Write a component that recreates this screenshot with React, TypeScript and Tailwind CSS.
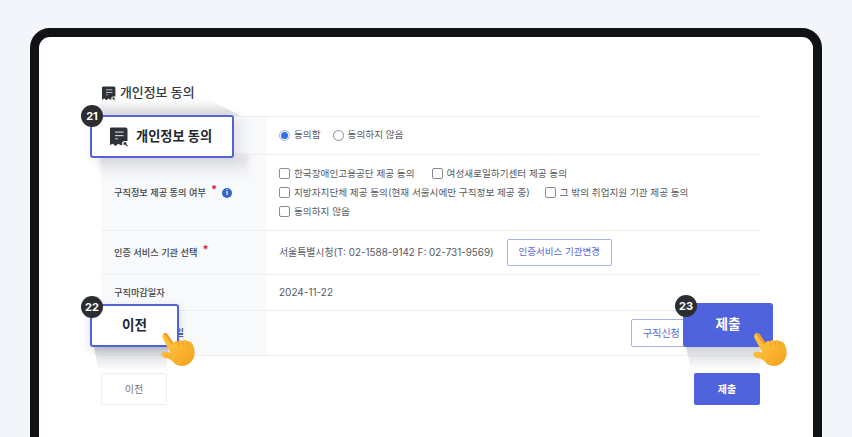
import React from "react";

const font = { fontFamily: '"Inter","Noto Sans CJK KR",sans-serif' };

function DocIcon({ className }: { className: string }) {
  return (
    <svg viewBox="0 0 18 20" className={className}>
      <path d="M2.500 0.500h13a2 2 0 0 1 2 2v11.500h-2.500a2.500 2.500 0 0 0-2.500 3.800l-1.500.4-2.700-1.500-2.800 2.300-2.800-2.300-3.200 1.600V2.500a2 2 0 0 1 2-2z" fill="#2f3238" />
      <rect x="5" y="4.500" width="8.500" height="1.200" fill="#c9cbce" />
      <rect x="5" y="8" width="8.500" height="1.200" fill="#c9cbce" />
      <rect x="5" y="11.300" width="3" height="1" fill="#c9cbce" />
      <circle cx="15" cy="16.500" r="1.500" fill="#2f3238" />
      <path d="M16 17.700l1.500 1.500" stroke="#2f3238" strokeWidth="1.200" />
    </svg>
  );
}

function Hand({ className }: { className: string }) {
  return (
    <svg viewBox="0 0 38 36" className={className}>
      <defs>
        <linearGradient id="hand" x1="0" y1="0" x2="1" y2="1">
          <stop offset="0" stopColor="#ffca45" />
          <stop offset="1" stopColor="#f4a21f" />
        </linearGradient>
      </defs>
      <path d="M2.500 1.500c2-1.500 4 .2 5 2l5 7.500c1-2 3-2.500 4.500-1.500 1-1.600 3.200-1.800 4.500-.6 1.400-1.400 3.600-1 4.600.6 2.300-.8 4.300.4 5.600 3 2.400 5 3 11.500-.7 16.500-3.200 4-8.600 6-13.500 4.600-3-.8-4.700-2.500-6.500-4.800l-4-2.200C4 25.800.2 25 .3 22.600c.1-2.400 3-3.200 6-2.600l3 .6-3.200-6L1.500 6C.8 4.500 1.200 2.500 2.500 1.500z" fill="url(#hand)" />
      <path d="M2.500 1.500C4.500 0 6.500 1.700 7.500 3.500l5 7.500-2 1.500-5-7C4.500 4 3 2.800 2.500 1.500z" fill="#ee8f2a" opacity=".75" />
      <path d="M17 9.500l1 4M21.500 8.900l1 4M26 9.500l.8 3.500" stroke="#e8942a" strokeWidth="1" fill="none" />
    </svg>
  );
}

function Badge({ n, className }: { n: number; className: string }) {
  return (
    <div className={`absolute z-30 flex h-[22px] w-[22px] items-center justify-center rounded-full bg-[#2b2d31] text-[11px] font-bold text-white ${className}`}>
      {n}
    </div>
  );
}

function Check({ label }: { label: string }) {
  return (
    <span className="flex items-center gap-[4px]">
      <span className="h-[11px] w-[11px] rounded-[2px] border border-[#8a8d94] bg-white" />
      <span>{label}</span>
    </span>
  );
}

function Row({ label, mark, info, className, children }: { label: string; mark?: boolean; info?: boolean; className: string; children?: React.ReactNode }) {
  return (
    <div className={`flex border-b border-[#eceef1] ${className}`}>
      <div className="flex w-[165px] shrink-0 items-center bg-[#f8f9fb] pl-[13px] text-[9.2px] font-medium text-[#3f434a]">
        {label}
        {mark && <span className="relative top-[-3px] ml-[5px] text-[11px] font-bold leading-none text-[#e5103f]">*</span>}
        {info && (
          <span className="ml-[5px] flex h-[10px] w-[10px] items-center justify-center rounded-full bg-[#3a62c9] text-[7px] font-bold leading-none text-white">i</span>
        )}
      </div>
      <div className="flex min-w-0 flex-1 items-center pl-[13px] pr-[4px] text-[9.65px] text-[#565a61]">{children}</div>
    </div>
  );
}

export default function App() {
  return (
    <div className="h-[437px] w-[852px] overflow-hidden bg-[#f4f5fa] pl-[30px] pt-[28px]" style={font}>
      <div className="relative h-[440px] w-[792px] rounded-[20px] border-[9px] border-[#111216] bg-white pl-[63px] pr-[53px] pt-[47px]">
        <div className="flex h-[18px] items-center gap-[4px] text-[12.9px] font-medium text-[#33373f]">
          <DocIcon className="h-[15px] w-[14px]" />
          개인정보 동의
        </div>
        <div className="-ml-[1px] mt-[14px] border-t border-[#eceef1]">
          <Row label="" className="h-[38px]">
            <span className="flex items-center gap-[4px]">
              <span className="flex h-[11px] w-[11px] items-center justify-center rounded-full border border-[#8fb4f5] bg-white">
                <span className="h-[7px] w-[7px] rounded-full bg-[#2f6fe8]" />
              </span>
              동의함
            </span>
            <span className="ml-[12px] flex items-center gap-[4px]">
              <span className="h-[11px] w-[11px] rounded-full border border-[#8a8d94]" />
              동의하지 않음
            </span>
          </Row>
          <Row label="구직정보 제공 동의 여부" mark info className="h-[76px]">
            <div className="flex flex-col gap-[6px] leading-[13px]">
              <div className="flex gap-[17px]">
                <Check label="한국장애인고용공단 제공 동의" />
                <Check label="여성새로일하기센터 제공 동의" />
              </div>
              <div className="flex gap-[15px]">
                <Check label="지방자치단체 제공 동의(현재 서울시에만 구직정보 제공 중)" />
                <Check label="그 밖의 취업지원 기관 제공 동의" />
              </div>
              <Check label="동의하지 않음" />
            </div>
          </Row>
          <Row label="인증 서비스 기관 선택" mark className="h-[44px]">
            <span className="text-[9.9px]">서울특별시청(T: 02-1588-9142 F: 02-731-9569)</span>
            <button className="ml-[13px] h-[27px] w-[105px] rounded-[2px] border border-[#a9b0ea] bg-white text-[9.5px] text-[#5a67d8]">
              인증서비스 기관변경
            </button>
          </Row>
          <Row label="구직마감일자" className="h-[36px]">
            <span className="text-[10px]">2024-11-22</span>
          </Row>
          <Row label="구직신청서 열람일" className="h-[45px]">
            <div className="flex flex-1 justify-end">
              <button className="h-[28px] w-[125px] rounded-[2px] border border-[#a9b0ea] bg-white pl-[11px] text-left text-[10px] text-[#5a67d8]">
                구직신청 첨부
              </button>
            </div>
          </Row>
        </div>
        <div className="-ml-[1px] mt-[17px] flex justify-between">
          <button className="h-[32px] w-[66px] rounded-[2px] border border-[#eceef1] bg-white text-[10px] text-[#70747b]">이전</button>
          <button className="h-[32px] w-[66px] rounded-[2px] bg-[#4f63dd] text-[10px] font-semibold text-white">제출</button>
        </div>

        {/* callout 21 */}
        <div className="absolute left-[52px] top-[62px] z-10 h-[17px] w-[150px] bg-gradient-to-t from-[#d6d7da] to-transparent blur-[2px] [clip-path:polygon(0_100%,8%_0,78%_0,100%_100%)]" />
        <div className="absolute left-[60px] top-[118px] z-10 h-[24px] w-[150px] bg-gradient-to-b from-[#e2e3e6] to-transparent blur-[2px]" />
        <div className="absolute left-[51px] top-[78px] z-20 flex h-[43px] w-[144px] items-center gap-[8px] rounded-[3px] border-2 border-[#5263d4] bg-white pl-[18px] text-[13.2px] font-semibold text-[#23262b] shadow-[6px_3px_14px_rgba(40,50,90,0.12)]">
          <DocIcon className="h-[20px] w-[18px]" />
          개인정보 동의
        </div>
        <Badge n={21} className="left-[42px] top-[68px]" />

        {/* callout 22 */}
        <div className="absolute left-[54px] top-[307px] z-10 h-[26px] w-[76px] bg-gradient-to-b from-[#c9cbd0] to-transparent blur-[1px] [clip-path:polygon(0_0,100%_0,96%_100%,8%_100%)]" />
        <div className="absolute left-[51px] top-[267px] z-20 flex h-[43px] w-[89px] items-center justify-center rounded-[3px] border-2 border-[#5263d4] bg-white text-[13.6px] font-semibold text-[#23262b] shadow-[0_3px_8px_rgba(40,50,90,0.18)]">
          이전
        </div>
        <Badge n={22} className="left-[42px] top-[259px]" />
        <Hand className="absolute left-[122px] top-[295px] z-30 h-[36px] w-[38px]" />

        {/* callout 23 */}
        <div className="absolute left-[646px] top-[306px] z-10 h-[26px] w-[76px] bg-gradient-to-b from-[#c9cbd0] to-transparent blur-[1px] [clip-path:polygon(0_0,100%_0,100%_100%,8%_100%)]" />
        <div className="absolute left-[644px] top-[266px] z-20 flex h-[44px] w-[90px] items-center justify-center rounded-[3px] bg-[#4f63dd] pb-[2px] text-[13.6px] font-semibold text-white">
          제출
        </div>
        <Badge n={23} className="left-[636px] top-[258px]" />
        <Hand className="absolute left-[714px] top-[295px] z-30 h-[36px] w-[38px]" />
      </div>
    </div>
  );
}
